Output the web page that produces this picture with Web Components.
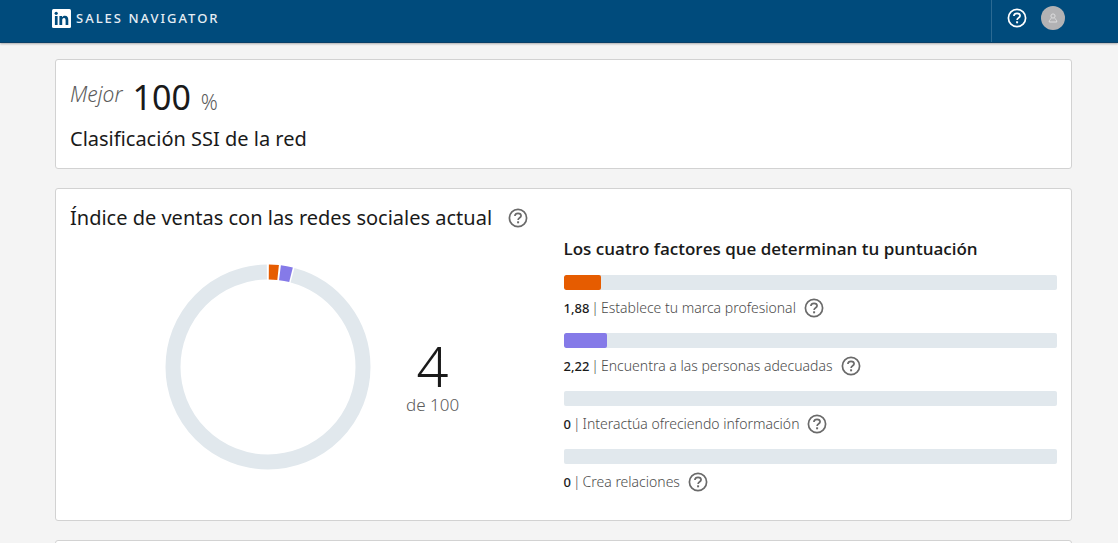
<!DOCTYPE html>
<html lang="es">
<head>
<meta charset="utf-8">
<meta name="viewport" content="width=device-width, initial-scale=1">
<title>Sales Navigator</title>
<style>
body { margin: 0; background: #f4f4f4; color: #1a1a1a; font-family: "Segoe UI", "Noto Sans", "Open Sans", sans-serif; }
</style>
</head>
<body>
<ssi-page></ssi-page>
<script>
function define(name, html, setup) {
  const template = document.createElement('template');
  template.innerHTML = html;
  customElements.define(name, class extends HTMLElement {
    constructor() {
      super();
      this.attachShadow({ mode: 'open' }).append(template.content.cloneNode(true));
    }
    connectedCallback() { if (setup) setup(this, this.shadowRoot); }
  });
}

define('help-button', `
<style>
:host { display: inline-flex; width: 20px; height: 20px; color: #6a6a6a; }
button { display: flex; width: 100%; height: 100%; padding: 0; border: 0; background: none; color: inherit; cursor: pointer; }
svg { width: 100%; height: 100%; }
</style>
<button type="button" aria-label="Ayuda"><svg viewBox="0 0 20 20" fill="none" stroke="currentColor" stroke-width="1.7">
<circle cx="10" cy="10" r="8.6"/><path d="M6.9 8.1C6.9 6.2 8.2 5.3 10 5.3s3.1 1 3.1 2.5c0 2.1-3 1.9-3 4.3"/><path d="M9.1 14.3h2" stroke-width="2"/>
</svg></button>`);

define('app-header', `
<style>
:host { display: block; background: #004b7c; color: #fff; border-bottom: 1px solid #0a4068; box-shadow: 0 1px 2px rgba(0,0,0,.3); }
header { display: flex; justify-content: space-between; height: 42px; padding: 0 53px 0 52px; }
a { display: flex; align-items: center; gap: 5px; height: 36px; color: #e6eef4; text-decoration: none; font-size: 13px; font-weight: 500; letter-spacing: 2px; }
a svg { width: 19px; height: 19px; }
.tools { display: flex; align-items: center; gap: 14px; height: 36px; padding-left: 15px; }
.right { border-left: 1px solid #2b6a93; }
.avatar { width: 24px; height: 24px; padding: 0; border: 0; border-radius: 50%; background: #b2b2b4; cursor: pointer; }
.avatar svg { display: block; width: 24px; height: 24px; }
help-button { color: #fff; }
</style>
<header>
<a href="#"><svg viewBox="0 0 19 19"><rect width="19" height="19" rx="1.5" fill="#fff"/><g fill="#004b7c"><circle cx="4.2" cy="4.3" r="1.6"/><path d="M2.9 7h2.7v9H2.9zM7.4 7H10v1.3c.5-.9 1.5-1.6 2.9-1.6 2.6 0 3.4 1.7 3.4 4.2V16h-2.7v-4.6c0-1.3-.3-2.3-1.6-2.3s-1.8 1-1.8 2.3V16H7.4z"/></g></svg><span>SALES NAVIGATOR</span></a>
<div class="right"><div class="tools"><help-button></help-button>
<button class="avatar" type="button" aria-label="Perfil"><svg viewBox="0 0 24 24" fill="none" stroke="#dededf"><circle cx="12" cy="10" r="2.1"/><path d="M10.5 12.3c-1 .7-2.3 1.4-2.3 3.7h7.6c0-2.3-1.3-3-2.3-3.7"/></svg></button>
</div></div>
</header>`);

define('ui-card', `
<style>
:host { display: block; box-sizing: border-box; padding: 14px; background: #fff; border: 1px solid #d2d2d2; border-radius: 3px; }
</style><slot></slot>`);

define('rank-summary', `
<style>
:host { display: block; }
p, h2 { margin: 0; font-weight: 400; }
p { display: flex; align-items: baseline; gap: 10px; height: 50px; line-height: 46px; color: #5c5c5c; }
em { align-self: flex-start; line-height: 40px; font-size: 21px; font-weight: 300; }
strong { font-size: 34px; font-weight: 400; color: #1a1a1a; }
span { font-size: 21px; font-weight: 300; }
h2 { font-size: 20px; line-height: 30px; }
</style>
<p><em>Mejor</em><strong>100</strong><span>%</span></p>
<h2>Clasificación SSI de la red</h2>`);

define('score-ring', `
<style>
:host { display: block; width: 206px; height: 206px; }
svg { display: block; width: 100%; height: 100%; transform: rotate(-90deg); }
</style>
<svg viewBox="0 0 206 206" fill="none" stroke-width="15" aria-hidden="true">
<circle cx="103" cy="103" r="95" pathLength="360" stroke="#e1e8ed" stroke-dasharray="344.3 15.7" stroke-dashoffset="-15"/>
<circle cx="103" cy="103" r="95" pathLength="360" stroke="#e65c00" stroke-dasharray="5.7 354.3" stroke-dashoffset="-.5"/>
<circle cx="103" cy="103" r="95" pathLength="360" stroke="#857ae8" stroke-dasharray="6.8 353.2" stroke-dashoffset="-7.3"/>
</svg>`);

define('score-factor', `
<style>
:host { display: flex; flex-direction: column; gap: 8px; }
.track { height: 15px; border-radius: 2px; background: #e1e8ed; overflow: hidden; }
.fill { height: 100%; border-radius: 2px; }
p { display: flex; align-items: center; gap: 8px; height: 20px; margin: 0; font-size: 14px; font-weight: 300; line-height: 20px; color: #4c4c4c; }
.label { display: flex; align-items: baseline; gap: 2px; }
b { font-size: 13px; font-weight: 500; color: #1a1a1a; }
</style>
<div class="track"><div class="fill"></div></div>
<p><span class="label"><b></b><span>|</span><span><slot></slot></span></span><help-button></help-button></p>`, (el, root) => {
  const value = el.getAttribute('value');
  const fill = root.querySelector('.fill');
  root.querySelector('b').textContent = value;
  fill.style.width = parseFloat(value.replace(',', '.')) / 25 * 100 + '%';
  fill.style.background = el.getAttribute('color') || 'none';
});

define('score-panel', `
<style>
:host { display: grid; grid-template-columns: 1fr 1fr; }
h2 { display: flex; align-items: center; gap: 16px; margin: 0; font-size: 20px; font-weight: 400; line-height: 30px; white-space: nowrap; }
.chart { display: flex; align-items: center; gap: 35px; padding: 31px 0 36px 95px; }
.total { display: flex; flex-direction: column; align-items: center; padding-top: 20px; font-size: 17px; line-height: 24px; color: #5c5c5c; font-weight: 300; white-space: nowrap; }
.total strong { font-size: 56px; line-height: 56px; font-weight: 300; color: #1a1a1a; }
.factors { display: flex; flex-direction: column; gap: 15px; padding-top: 33px; }
h3 { margin: 0 0 -2px; font-family: "Segoe UI", "Open Sans", sans-serif; font-size: 17px; font-weight: 600; line-height: 26px; }
</style>
<section><h2>Índice de ventas con las redes sociales actual <help-button></help-button></h2>
<div class="chart"><score-ring></score-ring><div class="total"><strong>4</strong><span>de 100</span></div></div></section>
<section class="factors"><h3>Los cuatro factores que determinan tu puntuación</h3>
<score-factor value="1,88" color="#e65c00">Establece tu marca profesional</score-factor>
<score-factor value="2,22" color="#857ae8">Encuentra a las personas adecuadas</score-factor>
<score-factor value="0">Interactúa ofreciendo información</score-factor>
<score-factor value="0">Crea relaciones</score-factor></section>`);

define('ssi-page', `
<style>
:host { display: flex; flex-direction: column; height: 100vh; overflow: hidden; }
app-header { flex: none; }
main { display: flex; flex-direction: column; gap: 19px; padding: 16px 46px 20px 55px; }
ui-card { flex: none; }
</style>
<app-header></app-header>
<main><ui-card><rank-summary></rank-summary></ui-card><ui-card><score-panel></score-panel></ui-card><ui-card></ui-card></main>`);
</script>
</body>
</html>
